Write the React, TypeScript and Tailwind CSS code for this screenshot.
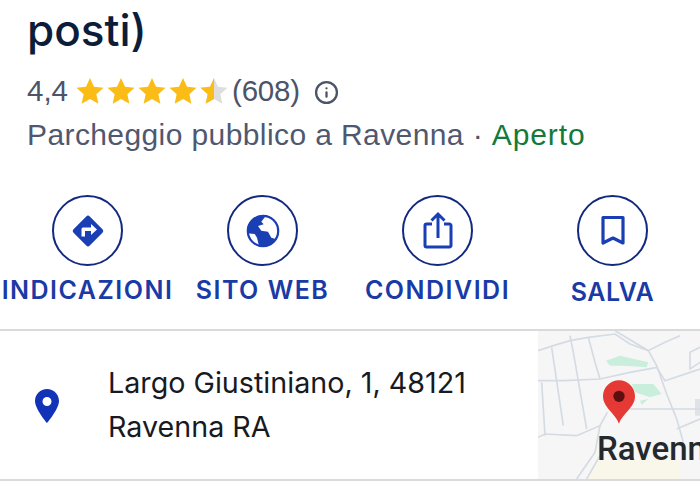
import { Info } from "lucide-react";

const actionColor = "#1a3fb5";

function Star({ half = false }: { half?: boolean }) {
  const d = "M12 1.5l3.2 7.1 7.6.8-5.7 5.2 1.6 7.6L12 18.3l-6.7 3.9 1.6-7.6-5.7-5.2 7.600-.8z";
  return (
    <svg width="30" height="30" viewBox="0 0 24 24" className="-mx-[0.5px]">
      {half ? (
        <>
          <path d={d} fill="#dedede" />
          <path d="M12 1.5l-3.2 7.1-7.6.8 5.7 5.2-1.6 7.6 6.7-3.9z" fill="#fbbc15" />
        </>
      ) : (
        <path d={d} fill="#fbbc15" />
      )}
    </svg>
  );
}

function DirectionsIcon() {
  return (
    <svg width="36" height="36" viewBox="0 0 36 36">
      <rect x="6.5" y="6.5" width="23" height="23" rx="2.5" fill={actionColor} transform="rotate(45 18 18)" />
      <path d="M11.500 23.500V16a1.500 1.500 0 0 1 1.500-1.500H21V11l6 5.500-6 5.500V18H15v5.500z" fill="#fff" />
    </svg>
  );
}

function GlobeIcon() {
  return (
    <svg width="36" height="36" viewBox="0 0 36 36">
      <circle cx="18" cy="18" r="16" fill={actionColor} />
      <path d="M20.700 3L16.300 8.700 18.700 11.300 13 13 16.300 17.700 23 18.700 26.300 24.700 30.700 26 35 17 30 6z" fill="#fff" />
      <path d="M2 20.300L9.700 21 12 24.700 14 33 6 30z" fill="#fff" />
      <circle cx="18" cy="18" r="15.200" fill="none" stroke={actionColor} strokeWidth="2.200" />
    </svg>
  );
}

function ShareIcon() {
  return (
    <svg width="36" height="44" viewBox="0 0 36 44" fill="none" stroke={actionColor} strokeWidth="3">
      <path d="M12 15H6.5a1.500 1.500 0 0 0-1.500 1.500v20a1.500 1.500 0 0 0 1.500 1.500h23a1.500 1.500 0 0 0 1.500-1.500v-20a1.500 1.500 0 0 0-1.500-1.500H24" />
      <path d="M18 29V5M11.500 11.500L18 5l6.500 6.500" />
    </svg>
  );
}

function BookmarkIcon() {
  return (
    <svg width="26" height="32" viewBox="0 0 26 32" fill="none" stroke={actionColor} strokeWidth="3.200">
      <path d="M3 2.500h20v25.500l-10-5-10 5z" strokeLinejoin="round" />
    </svg>
  );
}

function Action({ label, icon, drop = false }: { label: string; icon: React.ReactNode; drop?: boolean }) {
  return (
    <div className="flex flex-col items-center">
      <div className="w-[71px] h-[71px] rounded-full border-2 border-[#12297f] flex items-center justify-center">
        {icon}
      </div>
      <div className={`whitespace-nowrap text-[25px] leading-[30px] font-semibold text-[#1a3aa6] ${drop ? "mt-[11px] tracking-[0.5px]" : "mt-[9px] tracking-[1.5px]"}`}>
        {label}
      </div>
    </div>
  );
}

function MiniMap() {
  return (
    <svg viewBox="54 36 486 444" width="162" height="148" className="absolute inset-0 bg-[#f6f6f7]">
      <path d="M230 420H480V480H200z" fill="#f9f6ea" />
      <path d="M258 125L300 110 385 130 380 145 310 140 270 140z" fill="#c9efdc" />
      <path d="M335 195H400L425 225 390 235 345 220z" fill="#c9efdc" />
      <path d="M360 245L385 240 365 258z" fill="#c9efdc" />
      <path d="M525 240H540V290H525z" fill="#dfe2e6" />
      <g fill="none" stroke="#d5dbe3" strokeWidth="5">
        <path d="M54 95L100 80 150 65 205 55 285 45 330 75 385 95 435 70 480 50" />
        <path d="M285 35L385 95 410 140 440 225 470 300 490 370" />
        <path d="M54 185H130L240 180 330 160 410 145 435 185 540 150" />
        <path d="M95 85L130 320M160 100L200 330M150 50L160 100M205 55L225 130 240 180" />
        <path d="M65 190L75 350" />
        <path d="M54 355L75 345 170 350 240 320 262 280" />
        <path d="M240 320L225 400 170 480M200 480L240 410" />
        <path d="M330 270H540M470 330L540 300" />
        <path d="M540 85L510 100V150L540 130" />
      </g>
    </svg>
  );
}

export default function App() {
  return (
    <div className="w-[700px] h-[500px] overflow-hidden bg-white" style={{ fontFamily: "Inter, sans-serif" }}>
      <div className="pl-[27px] pt-[5px]">
        <h1 className="text-[44px] leading-[50px] font-medium text-[#0c1d3a]">
          posti)
        </h1>
        <div className="flex items-center h-[40px] mt-[16px] text-[29.5px] text-[#4b5468]" style={{ fontFamily: "'Liberation Sans', sans-serif" }}>
          <span>4,4</span>
          <div className="flex items-center ml-[7px] gap-[2px]">
            <Star />
            <Star />
            <Star />
            <Star />
            <Star half />
          </div>
          <span className="ml-[4px] tracking-[-0.2px]">(608)</span>
          <Info className="ml-[14px] mt-[3px] text-[#4b5468]" size={25} strokeWidth={2.2} />
        </div>
        <div className="mt-[4px] text-[30px] tracking-[0.4px] leading-[40px] text-[#4f5870] whitespace-nowrap" style={{ fontFamily: "'Liberation Sans', sans-serif" }}>
          Parcheggio pubblico a Ravenna <span className="text-[#4b5468]">·</span> <span className="text-[#137a3a] tracking-[0.9px]">Aperto</span>
        </div>
      </div>

      <div className="grid grid-cols-4 w-[700px] mt-[40px]">
        <Action label="INDICAZIONI" icon={<DirectionsIcon />} />
        <Action label="SITO WEB" icon={<GlobeIcon />} />
        <Action label="CONDIVIDI" icon={<ShareIcon />} />
        <Action label="SALVA" drop icon={<BookmarkIcon />} />
      </div>

      <div className="flex mt-[22px] h-[152px] border-t-2 border-b-2 border-[#dadada]">
        <div className="w-[108px] flex items-center pl-[35px] pt-[1px]">
          <svg width="24" height="34" viewBox="0 0 24 34">
            <path
              fillRule="evenodd"
              d="M12 0C5.400 0 0 5.400 0 12c0 8 12 22 12 22s12-14 12-22C24 5.400 18.600 0 12 0zm0 8a4.500 4.500 0 1 1 0 9 4.500 4.500 0 0 1 0-9z"
              fill="#1233b8"
            />
          </svg>
        </div>
        <div className="flex-1 flex flex-col justify-center text-[28.700px] leading-[44px] text-[#181a1f] whitespace-nowrap">
          <div>Largo Giustiniano, 1, 48121</div>
          <div>Ravenna RA</div>
        </div>
        <div className="relative w-[162px] overflow-hidden">
          <MiniMap />
          <svg width="32" height="44" viewBox="0 0 34 46" className="absolute left-[65px] top-[49px]">
            <path d="M17 0C7.600 0 0 7.600 0 17c0 12 13 18 17 29 4-11 17-17 17-29C34 7.600 26.400 0 17 0z" fill="#e53935" />
            <circle cx="17" cy="17" r="6" fill="#5c0f0f" />
          </svg>
          <div className="absolute left-[59px] top-[99px] text-[33px] leading-[38px] font-medium text-[#25282c] whitespace-nowrap" style={{ fontFamily: "Roboto, sans-serif" }}>
            Ravenna
          </div>
        </div>
      </div>
    </div>
  );
}
